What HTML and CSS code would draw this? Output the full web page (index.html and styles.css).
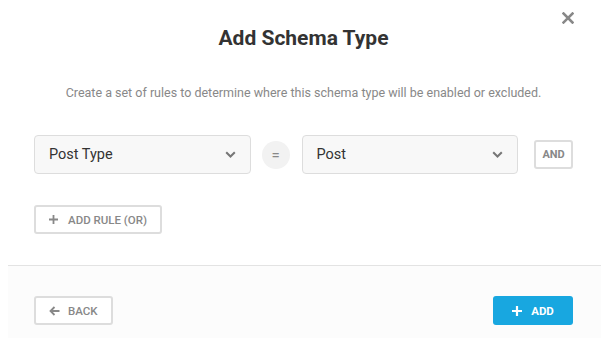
FILE: index.html
```html
<!DOCTYPE html>
<html lang="en">
<head>
    <meta charset="UTF-8">
    <meta name="viewport" content="width=device-width, initial-scale=1.0">
    <title>Add Schema Type</title>
    <link rel="stylesheet" href="styles.css">
</head>
<body>
    <div class="modal">
        <button class="close-btn" aria-label="Close">
            <svg width="12" height="12" viewBox="0 0 12 12"><path d="M1.5 1.5l9 9M10.5 1.5l-9 9" stroke="#888" stroke-width="2.5" stroke-linecap="square"/></svg>
        </button>

        <div class="modal-body">
            <h2 class="title">Add Schema Type</h2>
            <p class="desc">Create a set of rules to determine where this schema type will be enabled or excluded.</p>

            <div class="rule-row">
                <div class="select">
                    <span>Post Type</span>
                    <svg class="chevron" width="11" height="7" viewBox="0 0 11 7"><path d="M1.2 1.2l4.3 4.3 4.3-4.3" fill="none" stroke="#777" stroke-width="2"/></svg>
                </div>
                <span class="equals">=</span>
                <div class="select">
                    <span>Post</span>
                    <svg class="chevron" width="11" height="7" viewBox="0 0 11 7"><path d="M1.2 1.2l4.3 4.3 4.3-4.3" fill="none" stroke="#777" stroke-width="2"/></svg>
                </div>
                <button class="btn-outline and-btn">AND</button>
            </div>

            <button class="btn-outline add-rule">
                <svg width="9" height="9" viewBox="0 0 9 9"><path d="M4.5 0v9M0 4.5h9" stroke="#888" stroke-width="1.8"/></svg>
                ADD RULE (OR)
            </button>
        </div>

        <div class="modal-footer">
            <button class="btn-outline back-btn">
                <svg width="11" height="10" viewBox="0 0 11 10"><path d="M10.5 5H1.5M5.5 1L1.5 5l4 4" fill="none" stroke="#888" stroke-width="1.8"/></svg>
                BACK
            </button>
            <button class="btn-primary">
                <svg width="10" height="10" viewBox="0 0 10 10"><path d="M5 0v10M0 5h10" stroke="#fff" stroke-width="2.2"/></svg>
                ADD
            </button>
        </div>
    </div>
</body>
</html>
```

FILE: styles.css
```css
body {
    margin: 0;
    padding: 0;
    background: #fff;
    font-family: 'Roboto', 'Liberation Sans', sans-serif;
    color: #333;
}

.modal {
    position: relative;
    width: 593px;
    margin: 0 0 0 8px;
    background: #fff;
}

.close-btn {
    position: absolute;
    top: 12px;
    right: 27px;
    background: none;
    border: none;
    padding: 0;
    cursor: pointer;
}

.modal-body {
    padding: 26px 28px 31px 26px;
}

.title {
    margin: 0;
    font-size: 21px;
    line-height: 24px;
    font-weight: 700;
    text-align: center;
    color: #333;
}

.desc {
    margin: 34px 0 0;
    font-size: 12.5px;
    line-height: 18px;
    text-align: center;
    color: #888;
}

.rule-row {
    display: flex;
    align-items: center;
    margin-top: 33px;
}

.select {
    display: flex;
    align-items: center;
    justify-content: space-between;
    box-sizing: border-box;
    width: 217px;
    height: 39px;
    padding: 0 14px;
    background: #f8f8f8;
    border: 1px solid #ddd;
    border-radius: 4px;
    font-size: 14.5px;
    color: #333;
}

.equals {
    display: flex;
    align-items: center;
    justify-content: center;
    width: 28px;
    height: 28px;
    margin: 0 12px 0 11px;
    border-radius: 50%;
    background: #f2f2f2;
    color: #888;
    font-size: 15px;
}

.btn-outline {
    display: inline-flex;
    align-items: center;
    box-sizing: border-box;
    height: 29px;
    background: #fff;
    border: 2px solid #ddd;
    border-radius: 3px;
    color: #888;
    font-family: inherit;
    font-size: 11.5px;
    font-weight: 500;
    cursor: pointer;
}

.and-btn {
    width: 39px;
    justify-content: center;
    margin-left: 16px;
    padding: 0;
    font-size: 11px;
    font-weight: 700;
}

.add-rule {
    width: 128px;
    margin-top: 31px;
    padding: 0 0 0 13px;
    gap: 10px;
}

.modal-footer {
    display: flex;
    justify-content: space-between;
    padding: 30px 28px 13px 26px;
    background: #fcfcfc;
    border-top: 1px solid #e3e3e3;
}

.back-btn {
    width: 79px;
    padding: 0 0 0 13px;
    gap: 8px;
}

.btn-primary {
    display: inline-flex;
    align-items: center;
    justify-content: center;
    gap: 9px;
    width: 80px;
    height: 29px;
    background: #18a7e0;
    border: none;
    border-radius: 3px;
    color: #fff;
    font-family: inherit;
    font-size: 11.5px;
    font-weight: 700;
    cursor: pointer;
}
```
